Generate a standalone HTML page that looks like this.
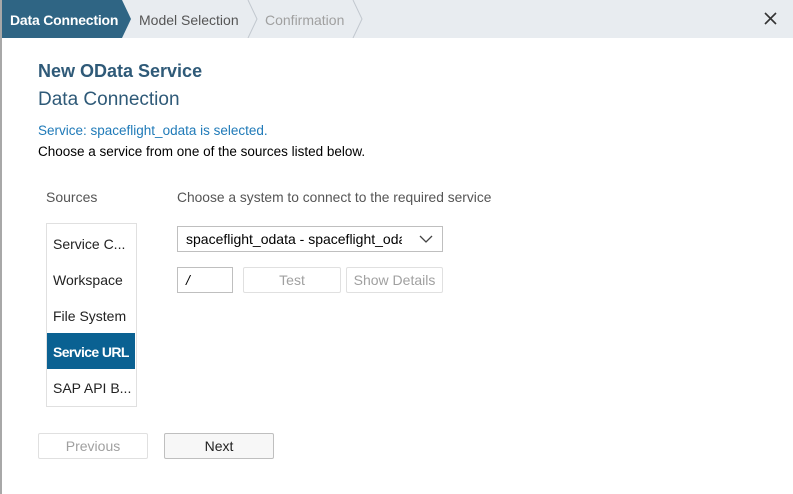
<!DOCTYPE html>
<html><head><style>
*{margin:0;padding:0;box-sizing:border-box}
body{width:793px;height:494px;overflow:hidden;background:#fff;font-family:"Liberation Sans",sans-serif;position:relative}
.abs{position:absolute;white-space:nowrap}
.strip{position:absolute;left:0;top:0;width:2px;height:494px;background:#a8a8a8}
.hdr{position:absolute;left:2px;top:0;width:791px;height:38px;background:#e8ecf0}
.btn{position:absolute;border:1px solid #c8c8c8;border-radius:2px;font-size:14px;text-align:center;background:#fff}
</style></head><body>
<div class="strip"></div>
<div class="hdr"></div>
<svg class="abs" style="left:0;top:0" width="793" height="38">
<polygon points="2,0 122,0 131,19 122,38 2,38" fill="#2f6584"/>
<polyline points="248,0 257,19 248,38" fill="none" stroke="#c2c8cf" stroke-width="1"/>
<polyline points="353,0 362,19 353,38" fill="none" stroke="#c2c8cf" stroke-width="1"/>
<path d="M765,13 L776,24 M776,13 L765,24" stroke="#333" stroke-width="1.6"/>
</svg>
<div class="abs" style="left:10px;top:12px;font-size:14px;color:#fff;font-weight:bold;letter-spacing:-0.2px">Data Connection</div>
<div class="abs" style="left:139px;top:12px;font-size:14px;color:#555">Model Selection</div>
<div class="abs" style="left:265px;top:12px;font-size:14px;color:#a0a0a0">Confirmation</div>

<div class="abs" style="left:38px;top:61px;font-size:18px;font-weight:bold;color:#2f5a78">New OData Service</div>
<div class="abs" style="left:38px;top:89px;font-size:19px;color:#2f5a78">Data Connection</div>
<div class="abs" style="left:38px;top:123px;font-size:13.5px;color:#1f7ab8">Service: spaceflight_odata is selected.</div>
<div class="abs" style="left:38px;top:144px;font-size:13.5px;color:#000">Choose a service from one of the sources listed below.</div>

<div class="abs" style="left:46px;top:189px;font-size:14px;color:#555">Sources</div>
<div class="abs" style="left:177px;top:190px;font-size:13.8px;color:#555">Choose a system to connect to the required service</div>

<div class="abs" style="left:46px;top:223px;width:91px;height:184px;border:1px solid #e0e0e0"></div>
<div class="abs" style="left:47px;top:333px;width:88px;height:36px;background:#0a6192"></div>
<div class="abs" style="left:53px;top:236px;font-size:14px;color:#222">Service C...</div>
<div class="abs" style="left:53px;top:272px;font-size:14px;color:#222">Workspace</div>
<div class="abs" style="left:53px;top:308px;font-size:14px;color:#222">File System</div>
<div class="abs" style="left:53px;top:344px;font-size:14px;color:#fff;font-weight:bold;letter-spacing:-0.6px">Service URL</div>
<div class="abs" style="left:53px;top:380px;font-size:14px;color:#222">SAP API B...</div>

<div class="abs" style="left:177px;top:226px;width:266px;height:26px;border:1px solid #bfbfbf;background:#fff"></div>
<div class="abs" style="left:186px;top:231px;width:216px;overflow:hidden;font-size:14px;color:#000">spaceflight_odata - spaceflight_odata</div>
<svg class="abs" style="left:418px;top:233px" width="16" height="12"><polyline points="2,3 8,9 14,3" fill="none" stroke="#444" stroke-width="1.3"/></svg>

<div class="abs" style="left:177px;top:267px;width:56px;height:26px;border:1px solid #bfbfbf"></div>
<div class="abs" style="left:186px;top:272px;font-size:14px;font-style:italic">/</div>
<div class="btn" style="left:243px;top:267px;width:98px;height:26px;line-height:24px;color:#a0a0a0;border-color:#e0e0e0">Test</div>
<div class="btn" style="left:346px;top:267px;width:97px;height:26px;line-height:24px;color:#a0a0a0;border-color:#e0e0e0">Show Details</div>

<div class="btn" style="left:38px;top:433px;width:110px;height:26px;line-height:24px;color:#a0a0a0;border-color:#e0e0e0">Previous</div>
<div class="btn" style="left:164px;top:433px;width:110px;height:26px;line-height:24px;color:#222;border-color:#bfbfbf;background:#f7f7f7">Next</div>
</body></html>
